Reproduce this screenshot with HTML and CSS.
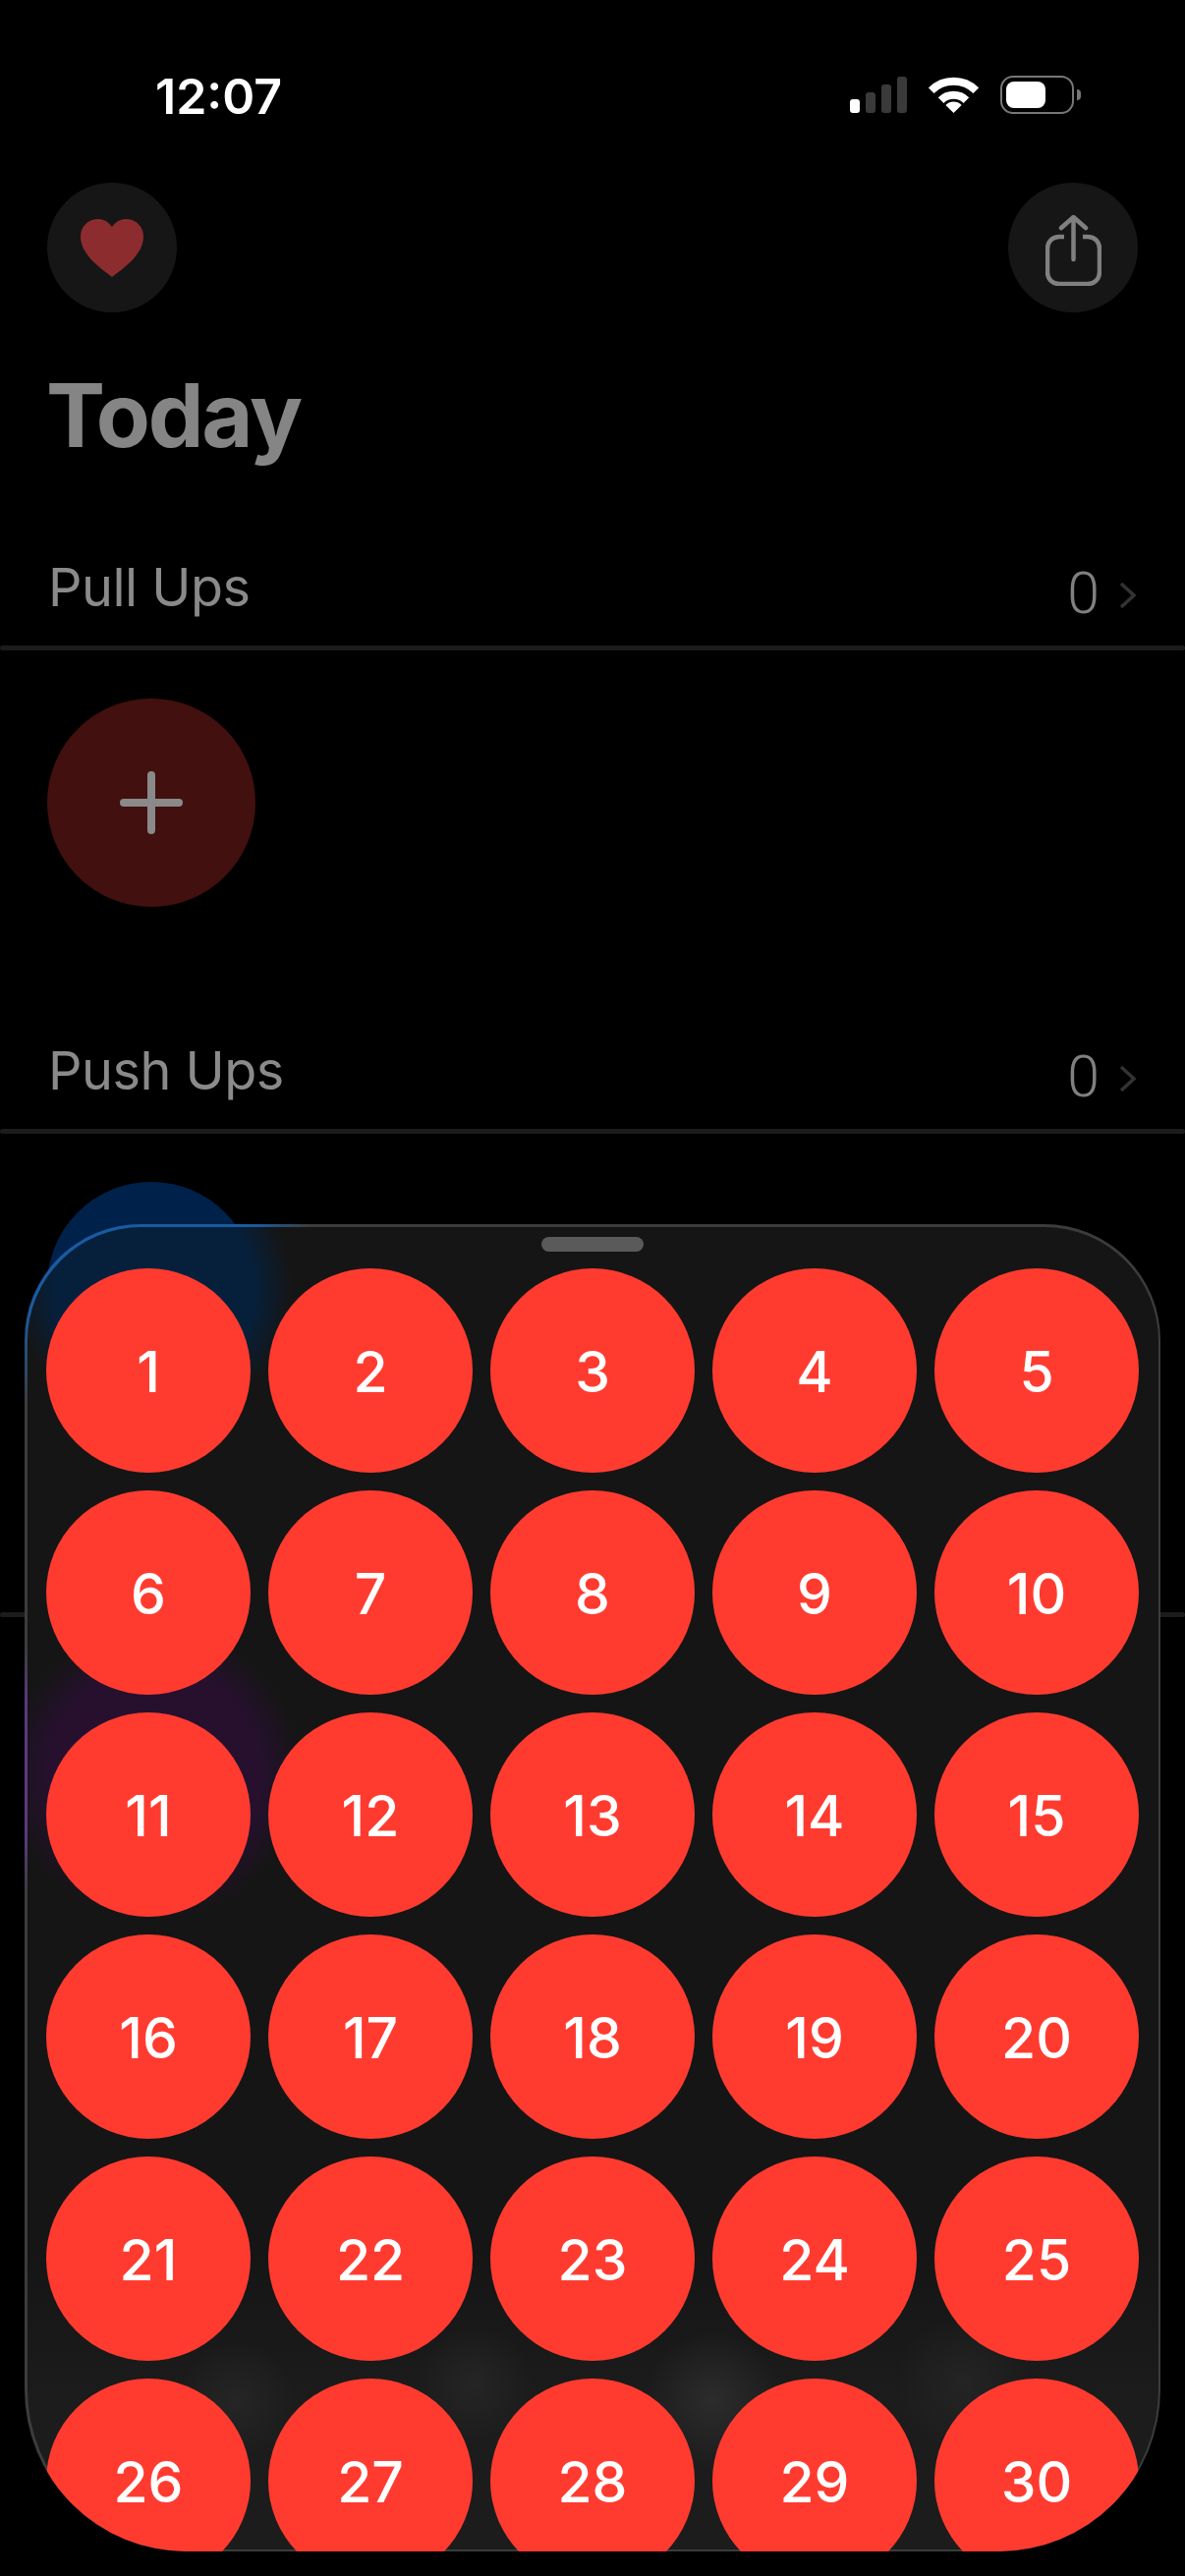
FILE: index.html
```html
<!DOCTYPE html>
<html lang="en">
<head>
  <meta charset="UTF-8" />
  <title>Today</title>
  <link rel="stylesheet" href="styles.css">
</head>
<body>
  <div class="page">
    <!-- Status bar -->
    <div class="status">
      <span class="time">12:07</span>
      <div class="status-icons">
        <div class="signal">
          <i class="bar bar-1"></i><i class="bar bar-2"></i><i class="bar bar-3"></i><i class="bar bar-4"></i>
        </div>
        <svg class="wifi" width="51" height="37" viewBox="0 0 51 37">
          <path d="M2.7 14.2A32.3 32.3 0 0 1 48.3 14.2" fill="none" stroke="#fff" stroke-width="8"/>
          <path d="M12.6 24.1A18.3 18.3 0 0 1 38.4 24.1" fill="none" stroke="#fff" stroke-width="8"/>
          <path d="M25.5 37L17.4 28.9A11.5 11.5 0 0 1 33.6 28.9Z" fill="#fff"/>
        </svg>
        <div class="battery"><div class="battery-fill"></div></div>
        <div class="battery-nub"></div>
      </div>
    </div>

    <!-- Top buttons -->
    <div class="topbar">
      <div class="round-btn">
        <svg width="64" height="59" viewBox="0 0 64 59">
          <path d="M32 59C25 53 0 38 0 18C0 7 8 0 18 0C25 0 29 4 32 8C35 4 39 0 46 0C56 0 64 7 64 18C64 38 39 53 32 59Z" fill="#8d2c2e"/>
        </svg>
      </div>
      <div class="round-btn">
        <svg class="share" width="57" height="73" viewBox="0 0 57 73">
          <path d="M19 23H14C7 23 2 28 2 35V59C2 66 7 71 14 71H43C50 71 55 66 55 59V35C55 28 50 23 43 23H38" fill="none" stroke="#808080" stroke-width="4.500"/>
          <path d="M28.500 46V3M16 14L28.500 3L41 14" fill="none" stroke="#808080" stroke-width="4.500" stroke-linecap="round" stroke-linejoin="round"/>
        </svg>
      </div>
    </div>

    <h1 class="title">Today</h1>

    <!-- Exercises -->
    <section class="exercise">
      <div class="row">
        <span class="name">Pull Ups</span>
        <span class="count">0</span>
        <svg class="chev" width="19" height="30" viewBox="0 0 19 30"><path d="M3 3L16 15L3 27" fill="none" stroke="#333" stroke-width="3.500"/></svg>
      </div>
      <div class="rule"></div>
      <div class="add add-red">
        <svg width="64" height="64" viewBox="0 0 64 64"><path d="M32 4V60M4 32H60" stroke="#8a8a8a" stroke-width="8" stroke-linecap="round"/></svg>
      </div>
    </section>

    <section class="exercise">
      <div class="row">
        <span class="name">Push Ups</span>
        <span class="count">0</span>
        <svg class="chev" width="19" height="30" viewBox="0 0 19 30"><path d="M3 3L16 15L3 27" fill="none" stroke="#333" stroke-width="3.500"/></svg>
      </div>
      <div class="rule"></div>
      <div class="add add-blue"></div>
    </section>

    <section class="exercise">
      <div class="row"></div>
      <div class="rule"></div>
      <div class="add add-purple"></div>
    </section>
  </div>

  <!-- Number picker sheet -->
  <div class="sheet">
    <div class="handle"></div>
    <div class="numbers">
      <div class="num">1</div><div class="num">2</div><div class="num">3</div><div class="num">4</div><div class="num">5</div>
      <div class="num">6</div><div class="num">7</div><div class="num">8</div><div class="num">9</div><div class="num">10</div>
      <div class="num">11</div><div class="num">12</div><div class="num">13</div><div class="num">14</div><div class="num">15</div>
      <div class="num">16</div><div class="num">17</div><div class="num">18</div><div class="num">19</div><div class="num">20</div>
      <div class="num">21</div><div class="num">22</div><div class="num">23</div><div class="num">24</div><div class="num">25</div>
      <div class="num">26</div><div class="num">27</div><div class="num">28</div><div class="num">29</div><div class="num">30</div>
    </div>
  </div>
</body>
</html>
```
FILE: styles.css
```css
*{margin:0;padding:0;box-sizing:border-box;}
html,body{width:1206px;height:2622px;background:#000;overflow:hidden;font-family:Inter,"Liberation Sans",sans-serif;}

.page{width:100%;height:100%;overflow:hidden;}

/* status bar */
.status{height:186px;display:flex;justify-content:space-between;align-items:flex-start;padding:64px 106px 0 158px;}
.time{color:#fff;font-size:50px;font-weight:600;line-height:68px;}
.status-icons{display:flex;align-items:flex-start;padding-top:14px;}
.signal{display:flex;align-items:flex-end;gap:6px;height:37px;margin-right:22px;}
.bar{display:block;width:10px;border-radius:3px;background:#3a3a3a;}
.bar-1{height:14px;background:#fff;}
.bar-2{height:21px;}
.bar-3{height:29px;}
.bar-4{height:37px;}
.battery{width:75px;height:39px;margin:-1px 0 0 22px;padding:4px;border:2.5px solid #777;border-radius:13px;}
.battery-fill{width:40px;height:100%;background:#fff;border-radius:8px;}
.battery-nub{width:4px;height:11px;margin:13px 0 0 3px;background:#777;border-radius:0 4px 4px 0;}

/* top buttons */
.topbar{display:flex;justify-content:space-between;padding:0 48px;}
.round-btn{width:132px;height:132px;border-radius:50%;background:#161616;display:flex;align-items:center;justify-content:center;}
.share{margin-top:5px;}

.title{color:#858585;font-size:90px;font-weight:700;line-height:110px;letter-spacing:-2.2px;padding:50px 0 0 47px;height:242px;}

/* exercise rows */
.exercise{height:492px;}
.row{height:97px;display:flex;align-items:flex-start;padding:0 49px 0 49px;}
.name{color:#8a8a8a;font-size:54px;font-weight:400;line-height:70px;letter-spacing:-.5px;margin:3px auto 0 0;}
.count{color:#808080;font-family:Roboto,sans-serif;font-size:59px;font-weight:300;line-height:70px;margin-top:9px;}
.chev{margin:31px 0 0 19px;}
.rule{height:5px;background:#1c1c1c;border-radius:3px;}
.add{width:212px;height:212px;margin:49px 0 0 48px;border-radius:50%;display:flex;align-items:center;justify-content:center;}
.add-red{background:#42100e;}
.add-blue{background:#00214a;}
.add-purple{background:#2a1038;}

/* sheet */
.sheet{position:absolute;left:25px;top:1246px;width:1156px;height:1351px;overflow:hidden;
  border-radius:118px 118px 165px 165px;
  background:
    radial-gradient(circle 175px at 129px 63px,#1a5aa0 0,#1a5aa0 70%,rgba(26,90,160,0) 100%),
    radial-gradient(circle 125px at 0 555px,#5a3a80 0,#5a3a80 55%,rgba(90,58,128,0) 100%),
    #3c3c3c;}
.sheet::before{content:"";position:absolute;inset:2.5px;border-radius:116px 116px 163px 163px;
  background:
    radial-gradient(circle 140px at 129px 63px,#06203c 0,#06203c 72%,rgba(6,32,60,0) 100%),
    radial-gradient(circle 150px at 129px 555px,#26102e 0,#26102e 72%,rgba(38,16,46,0) 100%),
    radial-gradient(circle 70px at 698px 1194px,#2c2c2c 0,rgba(44,44,44,0) 100%),
    radial-gradient(circle 60px at 212px 1194px,#252525 0,rgba(37,37,37,0) 100%),
    radial-gradient(circle 60px at 454px 1177px,#252525 0,rgba(37,37,37,0) 100%),
    radial-gradient(circle 70px at 953px 1177px,#242424 0,rgba(36,36,36,0) 100%),
    linear-gradient(#151515 0,#151515 1040px,#1c1c1c 1200px,#1c1c1c 100%);}
.handle{position:relative;width:104px;height:15px;margin:13px auto 17px;background:#5a5a5a;border-radius:8px;}
.numbers{position:relative;display:grid;grid-template-columns:repeat(5,208px);grid-auto-rows:208px;gap:18px;padding:0 22px;}
.num{border-radius:50%;background:#ff3b30;color:#fff;font-size:57px;font-weight:500;padding-top:2px;display:flex;align-items:center;justify-content:center;}
```
